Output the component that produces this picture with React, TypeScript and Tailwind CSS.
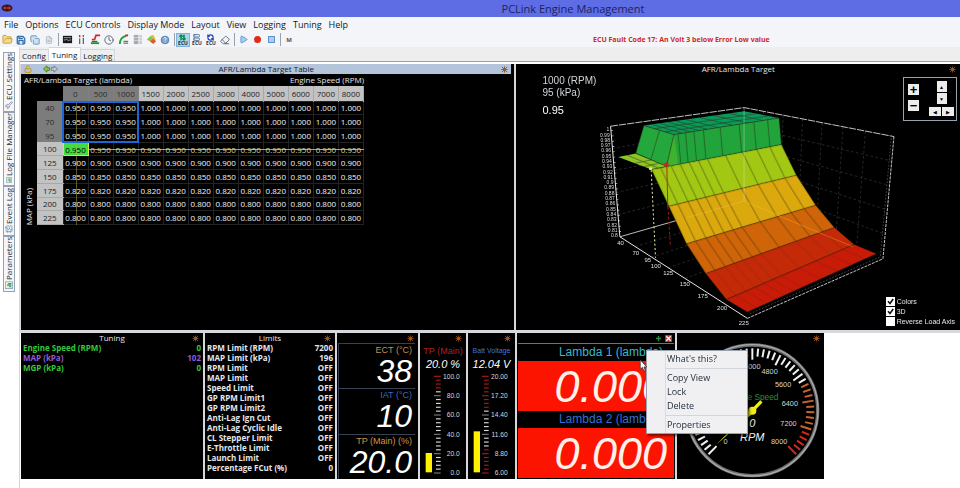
import React from "react";
import {
  FolderOpen,
  Save,
  Copy,
  FileText,
  Clock,
  Eraser,
  Play,
  RefreshCcw,
  ArrowUpDown,
  Wrench,
  CalendarClock,
  LockOpen,
  Server,
} from "lucide-react";

const ui = "font-['Open_Sans','Noto_Sans',sans-serif]";
const gaugeFont = "font-['Liberation_Sans',Arial,sans-serif]";

function Sun({ className = "" }: { className?: string }) {
  return (
    <svg viewBox="0 0 8 8" className={`size-[7px] ${className}`} aria-hidden="true">
      <path d="M4 .5v7M.5 4h7M1 1l6 6M7 1L1 7" stroke="#8a4c1a" strokeWidth="1" />
      <rect x="2.5" y="2.5" width="3" height="3" fill="#a0581c" />
    </svg>
  );
}

function PanelTitle({ children }: { children?: React.ReactNode }) {
  return (
    <div className="relative flex h-[10px] shrink-0 items-center justify-center text-[8px] leading-[10px] text-gray-200">
      {children}
      <Sun className="absolute right-[4px] top-[2px]" />
    </div>
  );
}

/* ---------- menu, toolbar ---------- */

const menus = ["File", "Options", "ECU Controls", "Display Mode", "Layout", "View", "Logging", "Tuning", "Help"];

function Tool({ label, active, children }: { label: string; active?: boolean; children: React.ReactNode }) {
  return (
    <button
      type="button"
      aria-label={label}
      className={`flex h-[14px] w-[14px] items-center justify-center ${active ? "border border-[#7db4dc] bg-[#a9d4f0]" : ""}`}
    >
      {children}
    </button>
  );
}

function Sep() {
  return (
    <span className="flex w-[4px] justify-center">
      <span className="h-[13px] w-px bg-gray-400" />
    </span>
  );
}

function EcuIcon({ kind }: { kind: "arrows" | "chip" | "sync" }) {
  return (
    <span className="flex flex-col items-center">
      {kind === "arrows" && <ArrowUpDown className="size-[7px] text-green-700" strokeWidth={5} />}
      {kind === "chip" && <Server className="size-[7px] text-[#4d6f95]" strokeWidth={3} />}
      {kind === "sync" && <RefreshCcw className="size-[7px] text-[#2343b0]" strokeWidth={4} />}
      <span className="text-[5px] font-bold leading-[5px] text-gray-800">ECU</span>
    </span>
  );
}

function Toolbar() {
  return (
    <div className="flex h-[15px] items-center">
      <Tool label="Open">
        <FolderOpen className="size-[11px] fill-[#f4dc8c] text-[#c79a3a]" />
      </Tool>
      <Tool label="Save">
        <Save className="size-[10px] fill-[#dbe9f7] text-[#2f6aa8]" strokeWidth={3} />
      </Tool>
      <Tool label="Copy">
        <Copy className="size-[10px] fill-[#cfe0f2] text-[#5b87b5]" />
      </Tool>
      <Tool label="Notes">
        <FileText className="size-[8px] text-gray-400" />
      </Tool>
      <Sep />
      <Tool label="ECU display">
        <svg viewBox="0 0 12 12" className="size-[11px]">
          <rect x="1" y="2" width="10" height="8" fill="#17191c" />
          <path d="M2 4h8M2 6.500h2l1-1 2 2 1-1h2" stroke="#c8ccd2" fill="none" strokeWidth=".8" />
        </svg>
      </Tool>
      <Tool label="Bars">
        <svg viewBox="0 0 12 12" className="size-[11px]">
          <path d="M4 5v6M8 4v7" stroke="#56585c" strokeWidth="1.300" />
          <path d="M4 1v2.500M8 1v2" stroke="#d42a20" strokeWidth="1.500" />
        </svg>
      </Tool>
      <Tool label="Trace">
        <svg viewBox="0 0 12 12" className="size-[11px]">
          <path d="M11 1.500H6.500L5 6H2" stroke="#d8261c" strokeWidth="1.800" fill="none" />
          <path d="M1 10h9" stroke="#1f8f35" strokeWidth="2" />
          <path d="M2 8h6" stroke="#222" strokeWidth="1" />
        </svg>
      </Tool>
      <Tool label="Clock">
        <Clock className="size-[10px] text-gray-600" />
      </Tool>
      <Tool label="Gauge">
        <svg viewBox="0 0 12 12" className="size-[11px]">
          <path d="M2 11C2 6 4 3 9 2" stroke="#23a33c" strokeWidth="2" fill="none" />
          <path d="M8 1.500h3" stroke="#d8261c" strokeWidth="2" />
          <path d="M6 8h5M6 10h5" stroke="#444" strokeWidth="1" />
        </svg>
      </Tool>
      <Tool label="Table">
        <svg viewBox="0 0 12 12" className="size-[11px]">
          <rect x="2" y="1" width="5" height="10" fill="#a9a9a9" />
          <rect x="8" y="1" width="3" height="10" fill="#cdcdcd" />
          <path d="M2 4h9M2 7h9" stroke="#eee" strokeWidth=".7" />
        </svg>
      </Tool>
      <Tool label="Surface">
        <svg viewBox="0 0 12 12" className="size-[11px]">
          <path d="M1 6l4-4 3 3-4 3z" fill="#8cc152" />
          <path d="M5 2l3-1 3 6-3-2z" fill="#e6b422" />
          <path d="M4 8l4-3 3 3-3 3z" fill="#df5b2c" />
        </svg>
      </Tool>
      <Tool label="Help">
        <svg viewBox="0 0 12 12" className="size-[10px]">
          <circle cx="6" cy="6" r="4.600" fill="#7fa6d2" stroke="#4674a8" />
          <path d="M4.500 4.500c0-2 3.200-1.800 3 0 0 1.200-1.500 1-1.500 2.300M6 8v1" stroke="#fff" fill="none" />
        </svg>
      </Tool>
      <Sep />
      <Tool label="Connect ECU" active>
        <EcuIcon kind="arrows" />
      </Tool>
      <Tool label="Store to ECU">
        <EcuIcon kind="chip" />
      </Tool>
      <Tool label="Refresh ECU">
        <EcuIcon kind="sync" />
      </Tool>
      <Tool label="Clear">
        <Eraser className="size-[10px] text-gray-600" />
      </Tool>
      <Sep />
      <Tool label="Play">
        <Play className="size-[9px] fill-[#a9cdf0] text-[#4b87c4]" />
      </Tool>
      <Tool label="Record">
        <span className="size-[7px] rounded-full bg-[#e02c14]" />
      </Tool>
      <Tool label="Stop">
        <span className="size-[7px] border border-[#5b93cc] bg-[#a9cdee]" />
      </Tool>
      <Sep />
      <Tool label="Marker">
        <span className="text-[6px] font-bold leading-[6px] text-gray-600">M</span>
      </Tool>
    </div>
  );
}

/* ---------- side tabs ---------- */

function ChartGlyph() {
  return (
    <svg viewBox="0 0 10 10" className="size-[8px] rotate-90">
      <rect x=".5" y=".5" width="9" height="9" fill="#e4f0e4" stroke="#7a9cb8" />
      <path d="M3 8V5M5 8V2.500M7 8V4" stroke="#2f9e4a" strokeWidth="1.400" />
    </svg>
  );
}

const sideTabs = [
  { name: "ECU Settings", size: "h-[60px]", icon: <Wrench className="size-[8px] text-gray-500" /> },
  { name: "Log File Manager", size: "h-[74px]", icon: <ChartGlyph /> },
  { name: "Event Log", size: "h-[50px]", icon: <CalendarClock className="size-[8px] text-[#4f86be]" /> },
  { name: "Parameters", size: "h-[56px]", icon: <ChartGlyph /> },
];

function SideTabs() {
  return (
    <nav className="flex w-[20px] shrink-0 flex-col border-r border-[#d4d6dc] pl-[3px] pt-[5px]">
      {sideTabs.map((t) => (
        <button
          key={t.name}
          type="button"
          className={`flex w-[12px] rotate-180 items-center gap-px border border-gray-400 bg-[#f6f6f8] pt-[2px] text-[8px] leading-[10px] text-gray-800 [writing-mode:vertical-rl] ${t.size}`}
        >
          {t.icon}
          <span className="whitespace-nowrap">{t.name}</span>
        </button>
      ))}
    </nav>
  );
}

/* ---------- target table ---------- */

const rpm = [0, 500, 1000, 1500, 2000, 2500, 3000, 4000, 5000, 6000, 7000, 8000];
const loads: [number, string][] = [
  [40, "1.000"],
  [70, "1.000"],
  [95, "1.000"],
  [100, "0.950"],
  [125, "0.900"],
  [150, "0.850"],
  [175, "0.820"],
  [200, "0.800"],
  [225, "0.800"],
];

function TargetTable() {
  return (
    <section className="flex min-w-[366px] flex-col bg-black">
      <div className="relative mr-[3px] flex h-[10px] items-center justify-center bg-[#b4c4da] text-[8px] leading-[10px] text-gray-900">
        <LockOpen className="absolute left-[3px] size-[8px] text-[#c79a1a]" strokeWidth={3} />
        <svg viewBox="0 0 18 9" className="absolute left-[21px] h-[8px] w-[17px]">
          <path d="M1 4.500L5 1v2h3v3H5v2z" fill="#8bc53f" stroke="#4c7a1c" />
          <path d="M17 4.500L13 1v2h-3v3h3v2z" fill="#c4c8cc" stroke="#70767c" />
        </svg>
        AFR/Lambda Target Table
        <Sun className="absolute right-[3px]" />
      </div>
      <div className="flex w-[343px] justify-between pl-[3px] text-[8px] leading-[12px] text-gray-200">
        <span>AFR/Lambda Target (lambda)</span>
        <span>Engine Speed (RPM)</span>
      </div>
      <div className="flex">
        <div className="flex w-[16px] shrink-0 items-end justify-center text-[8px] leading-[10px] text-gray-200">
          <span className="rotate-180 [writing-mode:vertical-rl]">MAP (kPa)</span>
        </div>
        <div className="relative">
          <table className="h-[139px] w-[327px] table-fixed border-collapse text-center text-[8px] leading-[11px]">
            <thead>
              <tr className="h-[15px]">
                <td className="w-[26px]" />
                {rpm.map((r, i) => (
                  <th
                    key={r}
                    scope="col"
                    className={`border-r p-0 font-normal ${i < 3 ? "border-[#808080] bg-[#7c7c7c] text-[#2c2c2c]" : "border-[#a8a8a8] bg-[#c2c2c2] text-[#222]"}`}
                  >
                    {r}
                  </th>
                ))}
              </tr>
            </thead>
            <tbody>
              {loads.map(([load, v], r) => (
                <tr key={load}>
                  <th
                    scope="row"
                    className={`p-0 font-normal ${r < 3 ? "bg-[#7c7c7c] text-[#2c2c2c]" : "border-b border-[#a8a8a8] bg-[#c2c2c2] text-[#222]"}`}
                  >
                    {load}
                  </th>
                  {rpm.map((c, i) => (
                    <td
                      key={c}
                      className={`border p-0 ${r === 3 && i === 0 ? "border-[#d4e84a] bg-[#3fdc3f] text-black" : r === 3 ? "border-[#232323] text-[#d8d4a0]" : "border-[#232323] text-gray-100"}`}
                    >
                      {r < 3 && i < 3 ? "0.950" : v}
                    </td>
                  ))}
                </tr>
              ))}
            </tbody>
          </table>
          <div className="absolute bottom-0 left-[39px] top-[15px] w-px bg-[#b8b04a]/50" />
          <div className="absolute left-[52px] right-0 top-[63px] h-px bg-[#d6cf86]/80" />
          <div className="absolute left-[25px] top-[15px] h-[42px] w-[77px] border-2 border-[#1c66d6]" />
        </div>
      </div>
    </section>
  );
}

/* ---------- 3D surface ---------- */

type P = [number, number];
const mix = (a: P, b: P, t: number): P => [a[0] + (b[0] - a[0]) * t, a[1] + (b[1] - a[1]) * t];
const pts = (...p: P[]) => p.map((q) => q.join(",")).join(" ");

// Left and right ends of each load row, from 100 kPa down to 225 kPa.
const edges: [P, P][] = [
  [[395, 300], [785, 225]],
  [[447, 410], [830, 317]],
  [[500, 523], [888, 407]],
  [[558, 612], [944, 474]],
  [[620, 690], [1003, 525]],
  [[683, 728], [1070, 553]],
];
const bandFill = ["#a3c814", "#dba80e", "#cf6408", "#c42a08", "#c81c08"];
const colStops = [0, 0.07, 0.15, 0.22, 0.29, 0.36, 0.43, 0.57, 0.7, 0.81, 0.91, 1];

const loadTicks: [number, number, string][] = [
  [302, 527, "40"],
  [348, 556, "70"],
  [384, 578, "95"],
  [408, 597, "100"],
  [445, 618, "125"],
  [495, 651, "150"],
  [549, 686, "175"],
  [607, 723, "200"],
  [672, 766, "225"],
];

function Line({ a, b, ...rest }: { a: P; b: P } & React.SVGProps<SVGLineElement>) {
  return <line x1={a[0]} y1={a[1]} x2={b[0]} y2={b[1]} {...rest} />;
}

function Surface() {
  const tl: P = [272, 170];
  const tb: P = [673, 114];
  const tr: P = [1123, 201];
  const bl: P = [300, 502];
  const bb: P = [673, 395];
  const br: P = [1090, 568];
  const bf: P = [683, 747];
  const dash = { stroke: "#3a3a3a", strokeWidth: 2, strokeDasharray: "8 7" };
  return (
    <svg viewBox="-12 15 1332 765" className="absolute inset-0 size-full" role="img" aria-label="AFR/Lambda target surface">
      {[0.2, 0.4, 0.6, 0.8].map((t) => (
        <g key={t}>
          <Line a={mix(tl, bl, t)} b={mix(tb, bb, t)} {...dash} />
          <Line a={mix(tb, bb, t)} b={mix(tr, br, t)} {...dash} />
        </g>
      ))}
      {[0.13, 0.26, 0.39, 0.52, 0.66, 0.81].map((t) => (
        <Line key={t} a={mix(tb, tr, t)} b={mix(bb, br, t)} {...dash} />
      ))}
      {[0.12, 0.25, 0.38, 0.51].map((t) => (
        <Line key={t} a={mix(bl, bf, t)} b={mix(bb, br, t)} {...dash} />
      ))}
      <Line a={bl} b={bb} stroke="#bbb" strokeWidth="3" />

      {edges.slice(0, -1).map(([l, r], i) => (
        <polygon key={i} points={pts(l, r, edges[i + 1][1], edges[i + 1][0])} fill={bandFill[i]} />
      ))}
      <polygon points="372,168 673,125 778,145 462,195" fill="#0c9a5c" />
      <polygon points="462,195 778,145 785,225 440,292" fill="#22a43c" />
      <polygon points="372,168 462,195 440,290 348,250" fill="#24a83e" />
      <polygon points="462,195 475,284 440,292" fill="#3fb32e" />
      <polygon points="295,262 348,252 440,290 395,300" fill="#8cc626" />

      <g stroke="#2a2a10" strokeWidth="2" fill="none" opacity=".75">
        {edges.map(([l, r], i) => (
          <Line key={i} a={l} b={r} />
        ))}
        {edges.slice(0, -1).map(([l, r], i) =>
          colStops.map((t) => (
            <Line key={`${i}-${t}`} a={mix(l, r, t)} b={mix(edges[i + 1][0], edges[i + 1][1], t)} opacity={i > 2 ? 0.35 : 1} />
          )),
        )}
        {[0.04, 0.11, 0.19, 0.28, 0.44, 0.62, 0.76, 0.89, 1].map((t) => (
          <Line key={t} a={mix([462, 195], [778, 145], t)} b={mix([470, 285], [785, 225], t)} />
        ))}
        {[0.08, 0.16, 0.24, 0.32, 0.42, 0.56, 0.7, 0.85].map((t) => (
          <Line key={t} a={mix([372, 168], [673, 125], t)} b={mix([462, 195], [778, 145], t)} />
        ))}
        {[0.35, 0.7].map((t) => (
          <Line key={t} a={mix([372, 168], [462, 195], t)} b={mix([673, 125], [778, 145], t)} />
        ))}
        <path d="M372 168L462 195L778 145M462 195L440 290M419 182L393 270M372 168L348 250M322 257L415 295M348 252L440 290M345 281L395 271M372 291L418 281" />
      </g>

      <g stroke="#e8e8e8" strokeWidth="3" fill="none">
        <path d="M272 170L300 502L683 747" />
        <path d="M272 170L673 114L1123 201" strokeDasharray="22 3" strokeWidth="2.500" />
        <path d="M1123 201L1090 568L683 747" strokeDasharray="9 3" strokeWidth="2.500" />
        <path d="M673 114V395" strokeWidth="2" opacity=".55" />
        <path d="M500 445L673 395L1000 532" strokeWidth="2" stroke="#ffd84a" opacity=".45" />
        <path d="M1115 206L1082 562L690 733" strokeWidth="1.500" strokeDasharray="5 5" opacity=".6" />
      </g>
      <path d="M394 302L407 565" stroke="#f4f0a0" strokeWidth="3" strokeDasharray="6 7" />
      <path d="M441 290L444 412" stroke="#a83218" strokeWidth="3" />
      <path d="M444 412L452 532" stroke="#a01818" strokeWidth="3" strokeDasharray="9 6" />
      <circle cx="440" cy="285" r="7" fill="#c8281c" />
      <rect x="388" y="294" width="8" height="7" fill="#f8f890" />

      <g className={gaugeFont} fill="#d8d8d8" fontSize="15" textAnchor="end">
        {Array.from({ length: 21 }, (_, i) => (
          <text key={i} x={268 + i * 1.3} y={185 + i * 15.9}>
            {i === 0 ? "1" : String((100 - i) / 100)}
          </text>
        ))}
      </g>
      <path d="M276 182L301 500" stroke="#ddd" strokeWidth="7" strokeDasharray="2 14" />
      <g className={gaugeFont} fill="#e0e0e0" fontSize="18" textAnchor="middle">
        {loadTicks.map(([x, y, s]) => (
          <text key={s} x={x} y={y}>
            {s}
          </text>
        ))}
      </g>
    </svg>
  );
}

const padBtn = "flex items-center justify-center bg-[#ececec] text-black";

const options = [
  { name: "Colors", on: true },
  { name: "3D", on: true },
  { name: "Reverse Load Axis", on: false },
];

function SurfacePanel() {
  return (
    <section className="flex flex-col bg-black">
      <PanelTitle>
        <span>AFR/Lambda Target</span>
      </PanelTitle>
      <div className={`relative min-h-[255px] flex-1 ${gaugeFont}`}>
        <Surface />
        <div className="absolute left-[26px] top-[1px] text-[10px] leading-[12px] text-gray-300">
          <p>1000 (RPM)</p>
          <p>95 (kPa)</p>
          <p className="pt-[5px] text-[11px] text-white">0.95</p>
        </div>
        <div className="absolute right-[3px] top-[3px] flex h-[44px] w-[54px] justify-between border border-gray-400 py-[3px] pl-[4px] pr-[2px]">
          <div className="flex flex-col gap-[5px] pt-[3px] text-[13px] font-bold leading-[10px]">
            <button type="button" aria-label="Zoom in" className={`size-[11px] ${padBtn}`}>+</button>
            <button type="button" aria-label="Zoom out" className={`size-[11px] ${padBtn}`}>−</button>
          </div>
          <div className="flex flex-col items-center gap-px text-[5px] leading-[8px]">
            <button type="button" aria-label="Tilt up" className={`h-[11px] w-[10px] ${padBtn}`}>▲</button>
            <button type="button" aria-label="Tilt down" className={`h-[11px] w-[10px] ${padBtn}`}>▼</button>
            <div className="flex gap-px pt-[2px]">
              <button type="button" aria-label="Rotate left" className={`h-[9px] w-[12px] ${padBtn}`}>◀</button>
              <button type="button" aria-label="Rotate right" className={`h-[9px] w-[12px] ${padBtn}`}>▶</button>
            </div>
          </div>
        </div>
        <div className="absolute bottom-[4px] right-[5px] flex flex-col gap-px text-[7px] leading-[9px] text-gray-200">
          {options.map((o) => (
            <label key={o.name} className="relative flex items-center gap-[2px]">
              <input type="checkbox" defaultChecked={o.on} className="peer size-[9px] appearance-none bg-white" />
              <svg viewBox="0 0 9 9" className="absolute left-0 top-0 hidden size-[9px] peer-checked:block">
                <path d="M2 4.300l2 2.200L7.200 2" stroke="#111" strokeWidth="1.600" fill="none" />
              </svg>
              {o.name}
            </label>
          ))}
        </div>
      </div>
    </section>
  );
}

/* ---------- lower panels ---------- */

const tuning = [
  ["Engine Speed (RPM)", "0", "text-[#34c83c]"],
  ["MAP (kPa)", "102", "text-[#8e5cd8]"],
  ["MGP (kPa)", "0", "text-[#34c83c]"],
];

const limits = [
  ["RPM Limit (RPM)", "7200"],
  ["MAP Limit (kPa)", "196"],
  ["RPM Limit", "OFF"],
  ["MAP Limit", "OFF"],
  ["Speed Limit", "OFF"],
  ["GP RPM Limit1", "OFF"],
  ["GP RPM Limit2", "OFF"],
  ["Anti-Lag Ign Cut", "OFF"],
  ["Anti-Lag Cyclic Idle", "OFF"],
  ["CL Stepper Limit", "OFF"],
  ["E-Throttle Limit", "OFF"],
  ["Launch Limit", "OFF"],
  ["Percentage FCut (%)", "0"],
];

function ValueList({ title, rows, className }: { title: string; rows: string[][]; className: string }) {
  return (
    <section className={`shrink-0 bg-black ${className}`}>
      <PanelTitle>{title}</PanelTitle>
      <dl className="px-[2px] text-[8px] font-bold leading-[10px]">
        {rows.map(([k, v, color = "text-gray-200"]) => (
          <div key={k} className={`flex justify-between ${color}`}>
            <dt>{k}</dt>
            <dd>{v}</dd>
          </div>
        ))}
      </dl>
    </section>
  );
}

const digits = [
  ["ECT (°C)", "38", "text-[#c88a4c]"],
  ["IAT (°C)", "10", "text-[#3c68b8]"],
  ["TP (Main) (%)", "20.0", "text-[#d89440]"],
];

function DigitPanel() {
  return (
    <section className="flex w-[81px] shrink-0 flex-col bg-black">
      <PanelTitle />
      <div className={`ml-px mr-[3px] flex flex-1 flex-col border-l border-gray-700 ${gaugeFont}`}>
        {digits.map(([k, v, color]) => (
          <div key={k} className="flex flex-1 flex-col border-t border-gray-700 pr-[3px] text-right">
            <span className={`text-[9px] leading-[12px] ${color}`}>{k}</span>
            <span className="text-[32px] italic leading-[30px] text-white">{v}</span>
          </div>
        ))}
      </div>
    </section>
  );
}

interface BarProps {
  title: string;
  className: string;
  titleClass: string;
  value: string;
  labels: string[];
  level: number;
  red: (i: number) => boolean;
}

function BarGauge({ title, className, titleClass, value, labels, level, red }: BarProps) {
  return (
    <section className={`flex shrink-0 flex-col bg-black text-center ${gaugeFont} ${className}`}>
      <PanelTitle />
      <h3 className={`whitespace-nowrap pt-[2px] leading-[12px] ${titleClass}`}>{title}</h3>
      <p className="whitespace-nowrap text-[11px] italic leading-[14px] text-white">{value}</p>
      <svg viewBox="0 0 138 324" className="h-[108px] w-[46px]">
        {Array.from({ length: 26 }, (_, i) => (
          <line
            key={i}
            x1={i % 5 ? 48 : 42}
            x2="62"
            y1={16 + i * 11.6}
            y2={16 + i * 11.6}
            stroke={red(i) ? "#a81818" : i % 5 ? "#d4d4d4" : "#777"}
            strokeWidth="3.500"
          />
        ))}
        <rect x="17" y={304 - level} width="19" height={level} fill="#fff200" />
        <g fontSize="20" fill="#d8d8d8" textAnchor="end">
          {labels.map((l, i) => (
            <text key={l} x="119" y={23 + i * 58}>
              {l}
            </text>
          ))}
        </g>
      </svg>
    </section>
  );
}

const menuItem = "block w-full pl-[20px] text-left text-[9px] leading-[14px] text-gray-800";

function LambdaPanel() {
  return (
    <section className="relative flex w-[158px] shrink-0 flex-col bg-black">
      <div className="flex h-[10px] items-center justify-end gap-[3px] pr-[3px]">
        <svg viewBox="0 0 8 8" className="size-[7px]">
          <path d="M4 1v6M1 4h6" stroke="#2f8a38" strokeWidth="1.500" />
        </svg>
        <svg viewBox="0 0 8 8" className="size-[7px]">
          <rect width="8" height="8" fill="#b8382c" />
          <path d="M1.500 1.500l5 5M6.500 1.500l-5 5" stroke="#fff" strokeWidth="1.500" />
        </svg>
      </div>
      <div className={`mx-px mb-px flex flex-1 flex-col border-t border-gray-500 ${gaugeFont}`}>
        {[
          ["Lambda 1 (lambda)", "text-[#35b8d0]"],
          ["Lambda 2 (lambda)", "text-[#2f6fd8]"],
        ].map(([k, color]) => (
          <div key={k} className="flex min-h-0 flex-1 basis-0 flex-col text-right">
            <span className={`pr-[11px] text-[12px] leading-[17px] ${color}`}>{k}</span>
            <span className="min-h-0 flex-1 basis-0 bg-[#fd1400] pr-[7px] text-[45px] italic leading-[52px] text-[#fff0ea]">0.000</span>
          </div>
        ))}
      </div>

      <div
        role="menu"
        className="absolute left-[129px] top-[17px] z-10 w-[102px] border border-gray-400 bg-[linear-gradient(90deg,#f0f0f2_18px,#dcdcde_18px,#dcdcde_19px,#f0f0f2_19px)] py-px shadow-[2px_2px_2px_rgba(0,0,0,0.5)]"
      >
        <button type="button" role="menuitem" className={menuItem}>What's this?</button>
        <hr className="my-[2px] ml-[19px] border-gray-300" />
        <button type="button" role="menuitem" className={menuItem}>Copy View</button>
        <button type="button" role="menuitem" className={menuItem}>Lock</button>
        <button type="button" role="menuitem" className={menuItem}>Delete</button>
        <hr className="my-[2px] ml-[19px] border-gray-300" />
        <button type="button" role="menuitem" className={menuItem}>Properties</button>
      </div>
      <svg viewBox="0 0 9 14" className="absolute left-[122px] top-[26px] z-20 h-[13px] w-[9px]">
        <path d="M1 1v10l2.300-2 1.700 4 1.500-.7L5 8.500h3z" fill="#fff" stroke="#333" strokeWidth=".8" />
      </svg>
    </section>
  );
}

function polar(cx: number, cy: number, rx: number, ry: number, deg: number): P {
  const a = (deg * Math.PI) / 180;
  return [cx + rx * Math.sin(a), cy - ry * Math.cos(a)];
}

function Tacho() {
  const cx = 727;
  const cy = 256;
  return (
    <section className="relative w-[147px] shrink-0 bg-black">
      <svg viewBox="501 24 441 438" className="block size-full" role="img" aria-label="Engine speed 0 RPM">
        <circle cx={cx} cy={cy} r="196" fill="none" stroke="#6c6e70" strokeWidth="10" />
        <circle cx={cx} cy={cy} r="197" fill="none" stroke="#a8aaac" strokeWidth="4" />
        {Array.from({ length: 51 }, (_, i) => {
          const deg = -135 + i * 5.4;
          const inner = i % 5 === 0 ? 152 : 162;
          return (
            <Line
              key={i}
              a={polar(cx, cy, 186, 186, deg)}
              b={polar(cx, cy, inner, inner, deg)}
              stroke={i > 45 ? "#d8261a" : i > 36 ? "#c8642c" : "#f2f2f2"}
              strokeWidth="6"
            />
          );
        })}
        <g className={gaugeFont} fontSize="22" fill="#d4d4d4" textAnchor="middle">
          {Array.from({ length: 11 }, (_, i) => {
            const [x, y] = polar(cx, cy, 114, 131, -135 + i * 27);
            return (
              <text key={i} x={x} y={y + 8}>
                {i * 800}
              </text>
            );
          })}
        </g>
        <text x={cx} y="225" fontSize="25" fill="#2c8c34" textAnchor="middle" className={gaugeFont}>
          Engine Speed
        </text>
        <path d="M620 358L724 250L732 262Z" fill="#d8d820" />
        <path d="M722 262L754 229" stroke="#f4ec10" strokeWidth="10" />
        <circle cx={cx} cy="257" r="12" fill="#f4ec10" />
        <g className={`italic ${gaugeFont}`} fontSize="33" fill="#f4f4f4" textAnchor="middle">
          <text x={cx} y="305">0</text>
          <text x={cx} y="347">RPM</text>
        </g>
      </svg>
      <Sun className="absolute right-[4px] top-[2px]" />
    </section>
  );
}

export default function App() {
  return (
    <div className={`flex min-h-screen flex-col bg-[#f4f5f8] ${ui}`}>
      <header className="relative flex h-[17px] items-center justify-center bg-[#5f6de4] pl-[186px] text-[11px] leading-[17px] text-[#1c2260]">
        <svg viewBox="0 0 12 8" className="absolute left-[1px] top-[4px] h-[8px] w-[12px]">
          <ellipse cx="6" cy="4" rx="5.500" ry="3.500" fill="#3a1014" />
          <path d="M2 4h8M4 2.500v3M8 2.500v3" stroke="#d04038" />
        </svg>
        <h1>PCLink Engine Management</h1>
      </header>
      <nav className="flex h-[15px] items-center gap-[7px] pl-[4px] text-[9px] leading-[14px] text-gray-900">
        {menus.map((m) => (
          <button key={m} type="button">
            {m}
          </button>
        ))}
      </nav>
      <div className="grid grid-cols-[1fr_1fr] items-center">
        <Toolbar />
        <p className="pl-[113px] text-[7px] font-bold leading-[10px] text-[#d0281c]">ECU Fault Code 17: An Volt 3 below Error Low value</p>
      </div>

      <div className="flex flex-1 bg-white">
        <SideTabs />
        <main className="flex min-w-0 flex-1 flex-col">
          <div role="tablist" className="flex h-[15px] items-start border-b border-gray-400 bg-[#eeeeee] text-[8px] leading-[11px] text-gray-900">
            <button type="button" role="tab" className="mt-[2px] h-[12px] border-r border-t border-gray-300 px-[2px]">Config</button>
            <button type="button" role="tab" aria-selected="true" className="h-[14px] border-r border-t border-gray-300 bg-white px-[3px]">Tuning</button>
            <button type="button" role="tab" className="mt-[2px] h-[12px] border-r border-t border-gray-300 px-[2px]">Logging</button>
          </div>
          <div className="mt-px flex flex-1 flex-col pt-px">
            <div className="grid flex-1 grid-cols-[494fr_444fr] gap-[2px] bg-[#d8d8dc] pl-px">
              <TargetTable />
              <SurfacePanel />
            </div>
            <div className="h-[3px] bg-[#d8d8dc]" />
            <div className="flex h-[146px] pl-px">
              <div className="flex gap-[2px] bg-[#d8d8dc]">
                <ValueList title="Tuning" rows={tuning} className="w-[182px]" />
                <ValueList title="Limits" rows={limits} className="w-[130px]" />
                <DigitPanel />
                <BarGauge
                  title="TP (Main)"
                  className="w-[46px]"
                  titleClass="text-[9px] text-[#b02020]"
                  value="20.0 %"
                  labels={["100.0", "80.0", "60.0", "40.0", "20.0", "0.0"]}
                  level={58}
                  red={(i) => i < 4}
                />
                <BarGauge
                  title="Batt Voltage"
                  className="w-[47px]"
                  titleClass="text-[7px] text-[#3c78d8]"
                  value="12.04 V"
                  labels={["20.00", "17.20", "14.40", "11.60", "8.80", "6.00"]}
                  level={123}
                  red={(i) => i < 9 || i > 18}
                />
                <LambdaPanel />
                <Tacho />
              </div>
            </div>
            <div className="h-[9px]" />
          </div>
        </main>
      </div>
    </div>
  );
}
